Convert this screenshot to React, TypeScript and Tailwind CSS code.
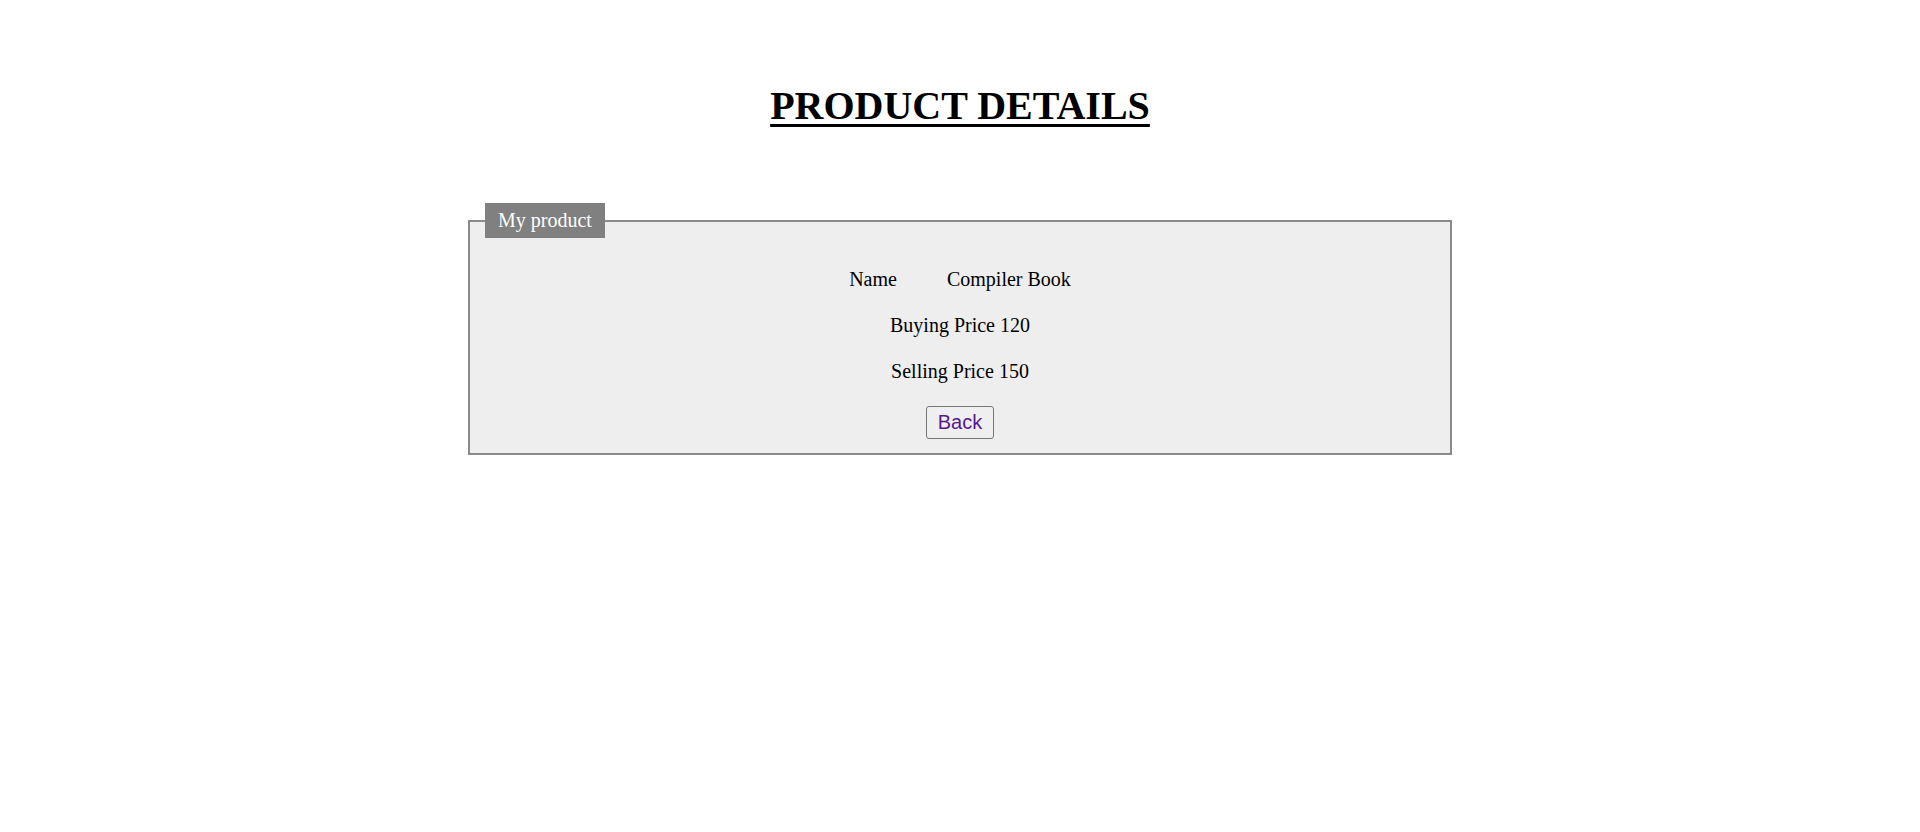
const rows = [
  { label: 'Buying Price', value: '120' },
  { label: 'Selling Price', value: '150' },
];

export default function App() {
  return (
    <div className="min-h-screen bg-white text-black font-['Liberation_Serif','Times_New_Roman',serif]">
      <div className="pt-[83px] text-center">
        <h1 className="text-[40px] leading-[46px] font-bold underline decoration-[3px] underline-offset-[5px]">
          PRODUCT DETAILS
        </h1>
      </div>

      <fieldset className="mx-auto mt-[74px] w-[984px] border-2 border-[#8a8a8a] bg-[#eeeeee] px-[15px] pt-[30px] pb-[14px]">
        <legend className="bg-[#808080] px-[13px] py-[6px] text-[20px] leading-[23px] text-white">
          My product
        </legend>

        <div className="flex flex-col items-center gap-[23px] text-[20px] leading-[23px]">
          <div className="flex gap-[50px]">
            <span>Name</span>
            <span>Compiler Book</span>
          </div>
          {rows.map((r) => (
            <div key={r.label}>
              {r.label} {r.value}
            </div>
          ))}
          <button className="h-[33px] rounded-[3px] border border-[#767676] bg-[#efefef] px-[11px] font-['Liberation_Sans',Arial,sans-serif] text-[20px] leading-[23px] text-[#551a8b]">
            Back
          </button>
        </div>
      </fieldset>
    </div>
  );
}
